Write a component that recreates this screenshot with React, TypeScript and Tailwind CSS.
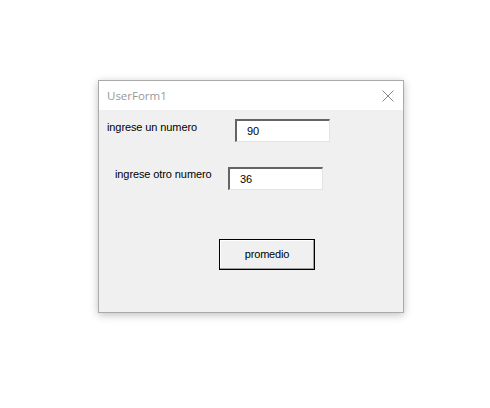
import React from "react";

function TextBox({ value }: { value: string }) {
  return (
    <div className="h-[23px] w-[95px] border-t-2 border-l-2 border-r border-b border-t-[#646464] border-l-[#646464] border-r-[#e3e3e3] border-b-[#e3e3e3] bg-white flex items-center pl-[10px] text-[11px] text-black">
      {value}
    </div>
  );
}

export default function App() {
  return (
    <div className="w-[490px] h-[408px] bg-white" style={{ fontFamily: '"Liberation Sans", Arial, sans-serif' }}>
      <div className="pt-[80px] pl-[98px]">
        <div className="w-[306px] h-[233px] border border-[#aaaaaa] bg-[#f0f0f0] shadow-[0_2px_8px_rgba(0,0,0,0.25)] flex flex-col">
          <div className="h-[29px] bg-white flex items-center justify-between pl-[8px] pr-[9px]">
            <span className="text-[11.5px] text-[#999999]" style={{ fontFamily: '"Open Sans", "Noto Sans", sans-serif' }}>UserForm1</span>
            <svg width="12" height="12" viewBox="0 0 12 12" className="block">
              <path d="M0.5 0.5 L11.5 11.5 M11.5 0.5 L0.5 11.5" stroke="#8a8a8a" strokeWidth="1" fill="none" />
            </svg>
          </div>
          <div className="flex flex-col">
            <div className="flex items-start pl-[8px] mt-[9px]">
              <div className="w-[128px] text-[11px] tracking-[-0.1px] text-black leading-[14px] mt-[1px]">ingrese un numero</div>
              <TextBox value="90" />
            </div>
            <div className="flex items-start pl-[16px] mt-[25px]">
              <div className="w-[113px] text-[11px] tracking-[-0.1px] text-black leading-[14px] mt-[0px]">ingrese otro numero</div>
              <TextBox value="36" />
            </div>
            <div className="pl-[120px] mt-[49px]">
              <button className="w-[96px] h-[31px] border border-black bg-[#f0f0f0] shadow-[inset_-1px_-1px_0_#a0a0a0,inset_1px_1px_0_#ffffff] text-[11px] tracking-[-0.2px] text-black flex items-center justify-center">
                promedio
              </button>
            </div>
          </div>
        </div>
      </div>
    </div>
  );
}
